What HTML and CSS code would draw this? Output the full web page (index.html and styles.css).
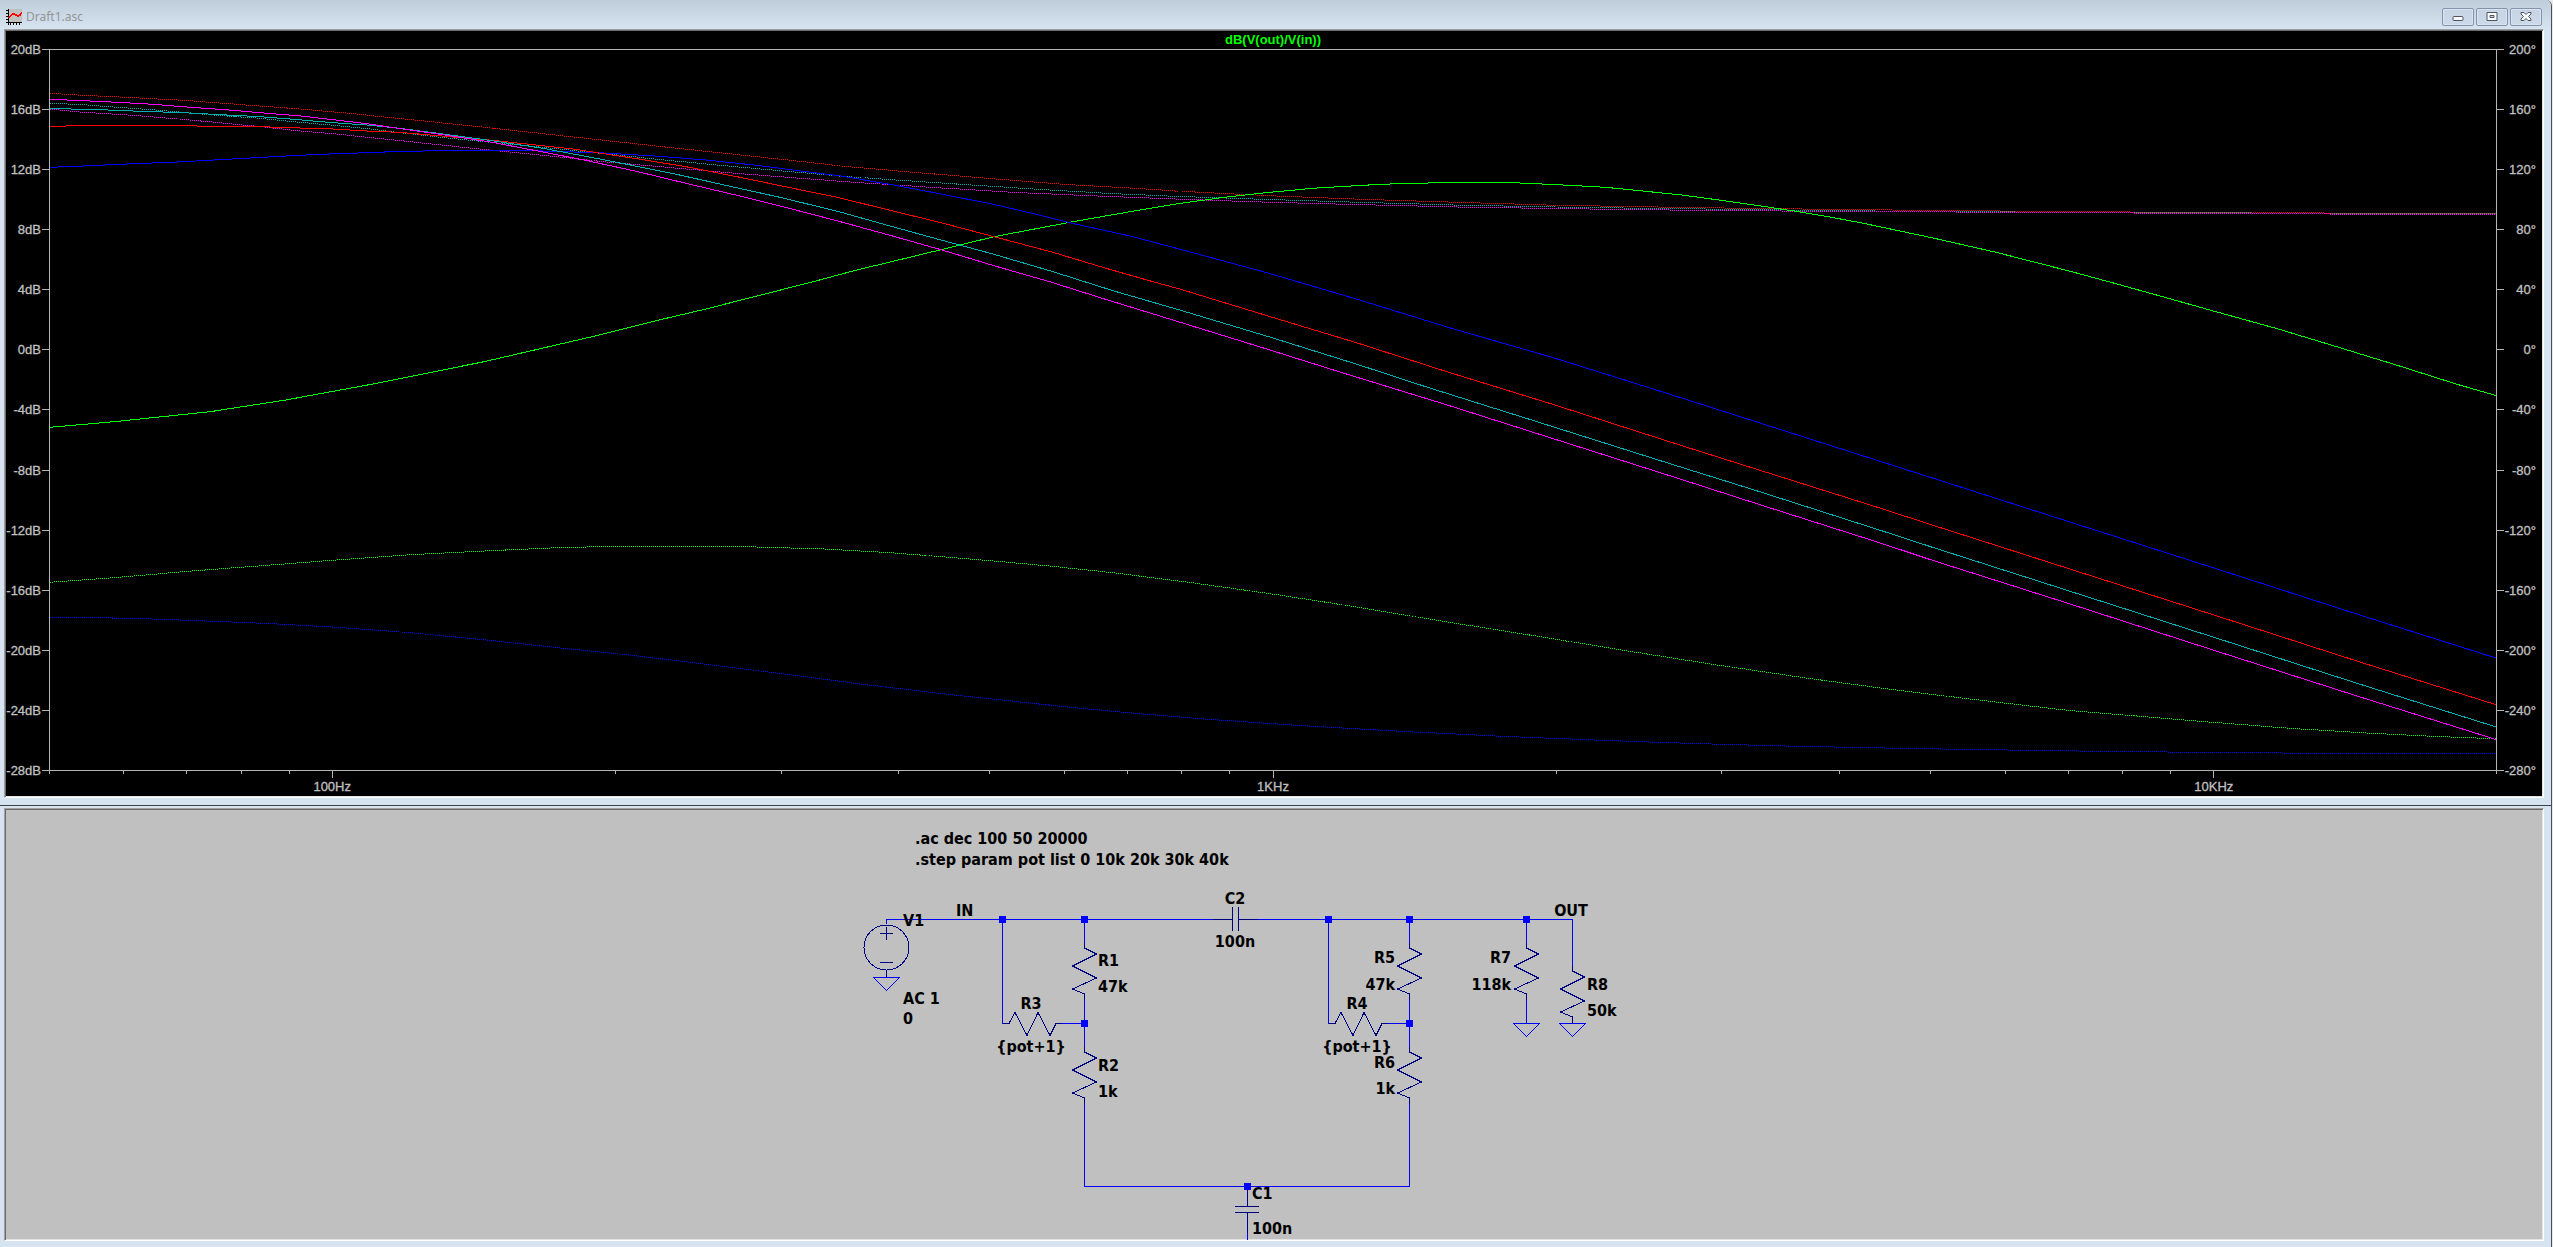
FILE: index.html
```html
<!DOCTYPE html>
<html lang="en">
<head>
<meta charset="utf-8">
<title>Draft1.asc</title>
<link rel="stylesheet" href="styles.css">
</head>
<body>
<main class="workspace">
  <section class="window plot-window">
    <header class="titlebar">
      <svg class="app-icon" viewBox="0 0 16 16" aria-hidden="true">
        <rect x="3" width="13" height="13" fill="#c0c0c0"/>
        <path d="M2.5 0v16M0 13.5h16M0 1.5h2M0 4.5h2M0 7.5h2M0 10.5h2M4.500 14v2M7.500 14v2M10.500 14v2M13.500 14v2" stroke="#000" fill="none"/>
        <path d="M3 9l3-3.500 2-1 2 1.500 2 1 2-1 2-2.500" stroke="#f00" stroke-width="1.500" fill="none"/>
      </svg>
      <h1 class="title">Draft1.asc</h1>
      <div class="controls">
        <button class="control" type="button" aria-label="Minimize"><svg viewBox="0 0 12 10"><rect x="1" y="4.500" width="10" height="4" rx="1"/></svg></button>
        <button class="control" type="button" aria-label="Maximize"><svg viewBox="0 0 12 10"><path d="M1 .5h10v8H1zM4 3.500v2h4v-2z" fill-rule="evenodd"/></svg></button>
        <button class="control" type="button" aria-label="Close"><svg viewBox="0 0 12 10"><path d="M1 .5h3l2 2 2-2h3v1.500L8.500 4.500 11 7v1.500H8l-2-2-2 2H1V7l2.500-2.500L1 2z"/></svg></button>
      </div>
    </header>
    <div class="client chart">
      <h2 class="trace-name">dB(V(out)/V(in))</h2>
      <ol class="axis axis-left">
        <li>20dB</li><li>16dB</li><li>12dB</li><li>8dB</li><li>4dB</li><li>0dB</li><li>-4dB</li><li>-8dB</li><li>-12dB</li><li>-16dB</li><li>-20dB</li><li>-24dB</li><li>-28dB</li>
      </ol>
      <div class="plot">
        <svg class="traces" viewBox="49 49 2448 722" preserveAspectRatio="none" role="img" aria-label="Magnitude and phase response">
          <g class="phase">
            <polyline class="green" points="50,582.3 114,577.7 188,571.3 262,565.7 336,560 410,554.7 499,550.3 558,547.7 610,546.4 691,546.4 750,546.8 824,549 891,552.7 979,559.7 1046,565.7 1113,572.7 1180,581.1 1269,593.5 1359,607.3 1448,622.1 1537,636.2 1626,650.7 1716,664.8 1805,677.9 1880,687.9 1934,694.7 2005,703.1 2068,710.4 2139,716.2 2213,722.3 2291,728.4 2367,733 2434,736.4 2496,738.7"/>
            <polyline class="blue" points="50,617.3 99,617.7 143,618.7 225,621.7 284,624.3 336,627.3 410,632.7 484,639.7 558,647.7 632,655.3 706,664.3 787,674.3 861,684 942,693.7 1001,700 1075,707.7 1135,713.3 1200,718.7 1300,725.5 1400,731.3 1500,736.2 1600,740.3 1700,743.7 1800,746.4 1934,748.9 2068,750.9 2213,752.5 2336,753.4 2496,753.5"/>
            <polyline class="red" points="50,93.3 83,95.3 133,97.7 183,100.3 233,104 300,109 350,113.3 397,118.3 466,125.3 543,133.7 604,140.3 665,147 732,154 788,160 844,166.3 910,172 987,178.3 1063,184.3 1135,188.3 1180,191.3 1278,196.1 1359,199.2 1457,202.3 1550,205.1 1644,206.8 1738,208.2 1850,209.6 1934,210.4 2068,211.6 2255,212.8 2496,213.5"/>
            <polyline class="teal" points="50,103.3 83,104.7 117,107.3 160,110.3 217,115.3 260,118.3 300,122.3 333,125.3 367,128.7 397,132.3 438,137 487,142 543,147.3 604,153.7 655,159 706,164 772,170 839,176 900,180.3 961,184.3 1038,189.3 1114,193.7 1180,196.5 1260,199.2 1359,202.3 1457,205.1 1582,207.5 1738,209.4 1850,210.8 1934,211.5 2112,212.6 2496,213.7"/>
            <polyline class="magenta" points="50,109 83,112.3 133,115.3 187,119.7 233,124 267,127.3 300,131 333,133.7 397,140.3 438,144.7 492,150.3 543,155.3 604,161.7 675,168 732,173 788,177.3 859,182.7 931,187.3 1012,192.3 1089,195.7 1180,199.2 1269,202.3 1367,204.8 1466,207.2 1582,208.9 1716,210.6 1880,211.6 2068,212.6 2246,213.7 2496,214.6"/>
          </g>
          <g class="magnitude">
            <polyline class="green" points="50,427.3 114,421.7 210,411.7 284,400.3 373,384 484,361.7 595,336 659,320 706,309 817,280.7 854,270.7 941,249.7 994,236.7 1073,221.7 1130,211.7 1180,203.4 1225,197.2 1269,192.4 1314,188.2 1372,184.8 1403,183.4 1466,182.4 1513,182.7 1559,184.8 1604,187.2 1626,189.3 1680,194.8 1716,199.6 1760,205.8 1800,212 1827,216.5 1862,223 1934,238.2 1996,252.3 2068,270.7 2112,282.6 2179,301.3 2213,310.9 2278,328.9 2336,346.5 2403,367.1 2456,384 2496,395.5"/>
            <polyline class="blue" points="50,167.3 77,166.3 120,164.3 177,162 220,159.7 280,156.3 320,154.3 367,152.7 400,151.4 441,150.7 487,150.3 543,151 604,153 655,156 706,160 757,165.3 803,171.3 839,175.7 890,184.3 941,194 992,204 1038,214.7 1073,223.5 1130,236 1180,249.2 1269,273.3 1359,299.8 1448,327.3 1553,357.6 1671,394.6 1760,423 1880,461.3 1934,478.5 2068,521.4 2213,567.7 2358,614.4 2496,658"/>
            <polyline class="red" points="50,126.3 83,125.7 133,125.3 187,125.9 260,126.7 300,128 333,129 367,131 400,132.4 438,135.7 492,140.3 533,144.7 573,149 604,153.7 645,160 686,166.7 737,176.7 793,188.3 839,197.700 890,210.3 941,222.7 994,236.7 1053,252.3 1104,267.7 1155,282.3 1180,289.1 1269,316.3 1359,343.5 1448,372.1 1553,404.4 1671,442.2 1760,470.3 1880,508.1 1934,525.6 2068,568.4 2213,614.7 2358,661.4 2496,704.7"/>
            <polyline class="teal" points="50,108.5 100,109.7 133,111 183,112.7 227,115 260,116.7 290,119 333,122.7 367,125 397,128 438,133.3 487,140 543,148.3 584,156 624,163.7 675,174 732,186.7 783,198 839,211.7 890,226 941,240 994,254.3 1053,271.7 1114,291 1180,310.1 1269,336.8 1359,364.9 1425,386.5 1537,421.7 1671,464 1760,491.8 1880,530.2 1934,547.8 2068,590.6 2213,637 2358,683.6 2496,726.9"/>
            <polyline class="magenta" points="50,99.3 83,100.7 117,102.3 153,104.3 187,107 233,110.3 267,113.3 300,115.9 333,119.7 367,123.7 400,128.6 438,134 492,142.3 543,152 584,160 635,171 686,183.3 747,197.7 788,208 839,221.3 890,235.3 941,249.7 994,265.7 1053,282.7 1099,297.3 1180,322.2 1269,349.7 1336,370.8 1448,405.2 1553,438.6 1671,476.1 1760,504.7 1880,542.9 1934,560.8 2068,603.3 2213,650 2358,696.3 2496,739.5"/>
          </g>
        </svg>
      </div>
      <ol class="axis axis-right">
        <li>200°</li><li>160°</li><li>120°</li><li>80°</li><li>40°</li><li>0°</li><li>-40°</li><li>-80°</li><li>-120°</li><li>-160°</li><li>-200°</li><li>-240°</li><li>-280°</li>
      </ol>
      <svg class="axis-bottom" role="img" aria-label="Frequency axis">
        <g class="minor">
          <line x2="0" y2="3"/><line x1="3.043%" x2="3.043%" y2="3"/><line x1="5.616%" x2="5.616%" y2="3"/><line x1="7.845%" x2="7.845%" y2="3"/><line x1="9.811%" x2="9.811%" y2="3"/>
          <line x1="23.137%" x2="23.137%" y2="3"/><line x1="29.905%" x2="29.905%" y2="3"/><line x1="34.706%" x2="34.706%" y2="3"/><line x1="38.431%" x2="38.431%" y2="3"/><line x1="41.474%" x2="41.474%" y2="3"/><line x1="44.047%" x2="44.047%" y2="3"/><line x1="46.276%" x2="46.276%" y2="3"/><line x1="48.242%" x2="48.242%" y2="3"/>
          <line x1="61.569%" x2="61.569%" y2="3"/><line x1="68.336%" x2="68.336%" y2="3"/><line x1="73.137%" x2="73.137%" y2="3"/><line x1="76.862%" x2="76.862%" y2="3"/><line x1="79.906%" x2="79.906%" y2="3"/><line x1="82.478%" x2="82.478%" y2="3"/><line x1="84.707%" x2="84.707%" y2="3"/><line x1="86.673%" x2="86.673%" y2="3"/><line x1="99.970%" x2="99.970%" y2="3"/>
        </g>
        <g class="major">
          <line x1="11.569%" x2="11.569%" y2="7"/><line x1="50%" x2="50%" y2="7"/><line x1="88.431%" x2="88.431%" y2="7"/>
        </g>
        <text x="11.569%" y="20">100Hz</text><text x="50%" y="20">1KHz</text><text x="88.431%" y="20">10KHz</text>
      </svg>
    </div>
  </section>

  <section class="window schematic-window">
    <div class="client sheet">
      <svg class="schematic" viewBox="854 810 840 440" role="img" aria-label="Circuit schematic">
        <defs>
          <g id="resistor"><path d="M.5 0v5l12 6-24 12 24 12-24 11 12 5v6"/></g>
          <g id="resistor-flat"><path d="M0 .5h6l6-11 12 23 11-23 12 23 6-12h6"/></g>
          <g id="ground"><path d="M-12.500 .5h26l-13 13z"/></g>
          <rect id="node" x="-3" y="-3" width="7" height="7"/>
        </defs>
        <g class="wires">
          <path d="M886.500 924v-4.500H1213M1257 919.500h315.500V966M1002.500 919.500v104h5M1060 1023.500h24M1084.500 919v24M1084.500 999v48M1084.500 1104v82.500h325V1104M1328.500 919.500v104h5M1386 1023.500h23M1409.500 919v24M1409.500 999v48M1526.500 919v24M1526.500 999v24M1247.500 1232v18"/>
          <use href="#ground" x="886" y="977"/><use href="#ground" x="1526" y="1023"/><use href="#ground" x="1572" y="1023"/>
        </g>
        <g class="parts">
          <circle cx="886.500" cy="947.500" r="22.500"/>
          <path d="M880 933.500h13M886.500 927v13M880 962.500h13M886.500 970v7"/>
          <path d="M1213 919.500h19M1232.500 907v24M1238.500 907v24M1239 919.500h18"/>
          <path d="M1247.500 1187v19M1235 1206.500h24M1235 1212.500h24M1247.500 1213v20"/>
          <use href="#resistor" x="1084" y="943"/><use href="#resistor" x="1084" y="1047"/><use href="#resistor" x="1409" y="943"/><use href="#resistor" x="1409" y="1047"/><use href="#resistor" x="1526" y="943"/><use href="#resistor" x="1572" y="966"/>
          <use href="#resistor-flat" x="1003" y="1023"/><use href="#resistor-flat" x="1329" y="1023"/>
        </g>
        <g class="nodes">
          <use href="#node" x="1002" y="919"/><use href="#node" x="1084" y="919"/><use href="#node" x="1084" y="1023"/><use href="#node" x="1328" y="919"/><use href="#node" x="1409" y="919"/><use href="#node" x="1409" y="1023"/><use href="#node" x="1526" y="919"/><use href="#node" x="1247" y="1186"/>
        </g>
        <g class="labels">
          <text x="915" y="844">.ac dec 100 50 20000</text>
          <text x="915" y="865">.step param pot list 0 10k 20k 30k 40k</text>
          <text x="903" y="926">V1</text><text x="956" y="916">IN</text>
          <text x="903" y="1004">AC 1</text><text x="903" y="1024">0</text>
          <text x="1098" y="966">R1</text><text x="1098" y="992">47k</text>
          <text x="1098" y="1071">R2</text><text x="1098" y="1097">1k</text>
          <text x="1252" y="1199">C1</text><text x="1252" y="1234">100n</text>
          <text x="1587" y="990">R8</text><text x="1587" y="1016">50k</text>
          <g class="mid">
            <text x="1235" y="904">C2</text><text x="1235" y="947">100n</text>
            <text x="1031" y="1009">R3</text><text x="1031" y="1052">{pot+1}</text>
            <text x="1357" y="1009">R4</text><text x="1357" y="1052">{pot+1}</text>
            <text x="1571" y="916">OUT</text>
          </g>
          <g class="end">
            <text x="1395" y="963">R5</text><text x="1395" y="990">47k</text>
            <text x="1395" y="1068">R6</text><text x="1395" y="1094">1k</text>
            <text x="1511" y="963">R7</text><text x="1511" y="990">118k</text>
          </g>
        </g>
      </svg>
    </div>
  </section>
</main>
</body>
</html>
```

FILE: styles.css
```css
* { box-sizing: border-box; }

body {
  margin: 0;
  background: #d6e4f2;
  font-family: "Liberation Sans", Arial, sans-serif;
}

.workspace {
  display: grid;
  grid-template-rows: 806fr 441fr;
  height: 100vh;
  padding-right: 1px;
  background: #e8e8e8;
}

.window {
  display: flex;
  flex-direction: column;
  min-height: 0;
  background: #d6e4f2;
  border-right: 1px solid #4a4f57;
}

.plot-window {
  padding-bottom: 7px;
  border-bottom: 1px solid #3c4046;
  border-top-right-radius: 6px;
}

.schematic-window {
  padding: 2px 0 6px;
}

.titlebar {
  display: flex;
  align-items: center;
  height: 29px;
  flex: none;
  gap: 4px;
  padding: 5px 9px 0 6px;
  background: linear-gradient(#bfcddb, #d6e4f2);
  border-top-right-radius: 6px;
}

.app-icon {
  width: 16px;
  height: 16px;
  shape-rendering: crispEdges;
}

.title {
  margin: 0;
  font: 400 12px/16px "Noto Sans", "Open Sans", sans-serif;
  color: #949494;
}

.controls {
  display: flex;
  gap: 2px;
  margin-left: auto;
}

.control {
  display: flex;
  align-items: center;
  justify-content: center;
  width: 32px;
  height: 18px;
  padding: 0;
  border: 1px solid #8493ae;
  border-radius: 2px;
  background: linear-gradient(#c6d4e3, #cbd9e8);
  box-shadow: inset 0 0 0 1px #d8e3ef;
}

.control svg {
  width: 12px;
  height: 10px;
  fill: #fafafa;
  stroke: #4f5663;
}

.client {
  flex: 1;
  min-height: 0;
  margin: 0 7px 0 4px;
  border: 1px solid;
  border-color: #a0a0a0 #fff #fff #a0a0a0;
  overflow: hidden;
}

.chart {
  display: grid;
  grid-template: 18px 1fr 25px / 43px 1fr 45px;
  background: #000;
  color: #c0c0c0;
  font-size: 13px;
  -webkit-text-stroke: 0.3px currentColor;
  box-shadow: inset 1px 1px #696969, inset -1px -1px #e3e3e3;
  padding: 1px;
}

.trace-name {
  grid-column: 2;
  margin: 0;
  font-size: 13px;
  line-height: 18px;
  text-align: center;
  color: #0f0;
  -webkit-text-stroke: 0;
}

.axis {
  display: flex;
  flex-direction: column;
  justify-content: space-between;
  grid-row: 2;
  margin: 0;
  padding: 0;
  list-style: none;
}

.axis li {
  display: flex;
  align-items: center;
  justify-content: flex-end;
  height: 1px;
  white-space: nowrap;
}

.axis li::before,
.axis li::after {
  flex: none;
  width: 7px;
  height: 1px;
  background: #b4b4b4;
}

.axis-left li::after {
  content: "";
  margin-left: 1px;
}

.axis-right {
  grid-column: 3;
  padding-right: 6px;
}

.axis-right li::before {
  content: "";
  margin-right: auto;
}

.plot {
  grid-area: 2 / 2;
  min-height: 0;
  box-shadow: inset 0 0 0 1px #b4b4b4;
}

.traces {
  display: block;
  width: 100%;
  height: 100%;
  shape-rendering: crispEdges;
}

.traces polyline {
  fill: none;
  stroke-width: 1px;
  vector-effect: non-scaling-stroke;
}

.phase { stroke-dasharray: 1 1; }

.green { stroke: #0f0; }
.blue { stroke: #00f; }
.red { stroke: #f00; }
.teal { stroke: #00b0b0; }
.magenta { stroke: #f0f; }

.axis-bottom {
  grid-area: 3 / 2;
  width: 100%;
  height: 25px;
  overflow: visible;
  stroke: #b4b4b4;
  shape-rendering: crispEdges;
}

.axis-bottom text {
  fill: #c0c0c0;
  stroke: #c0c0c0;
  stroke-width: 0.3px;
  text-anchor: middle;
}

.sheet {
  display: flex;
  justify-content: center;
  background: #c0c0c0;
  box-shadow: inset 1px 1px #696969, inset -1px -1px #e3e3e3;
  padding: 1px;
}

.schematic {
  flex: none;
  width: 840px;
  height: 440px;
}

.wires,
.parts {
  fill: none;
  shape-rendering: crispEdges;
}

.wires { stroke: #00f; }
.parts { stroke: #000080; }
.nodes { fill: #00f; }

.labels {
  font: 700 16px "DejaVu Sans Condensed", "Noto Sans", sans-serif;
  fill: #000;
}

.mid { text-anchor: middle; }
.end { text-anchor: end; }
```
